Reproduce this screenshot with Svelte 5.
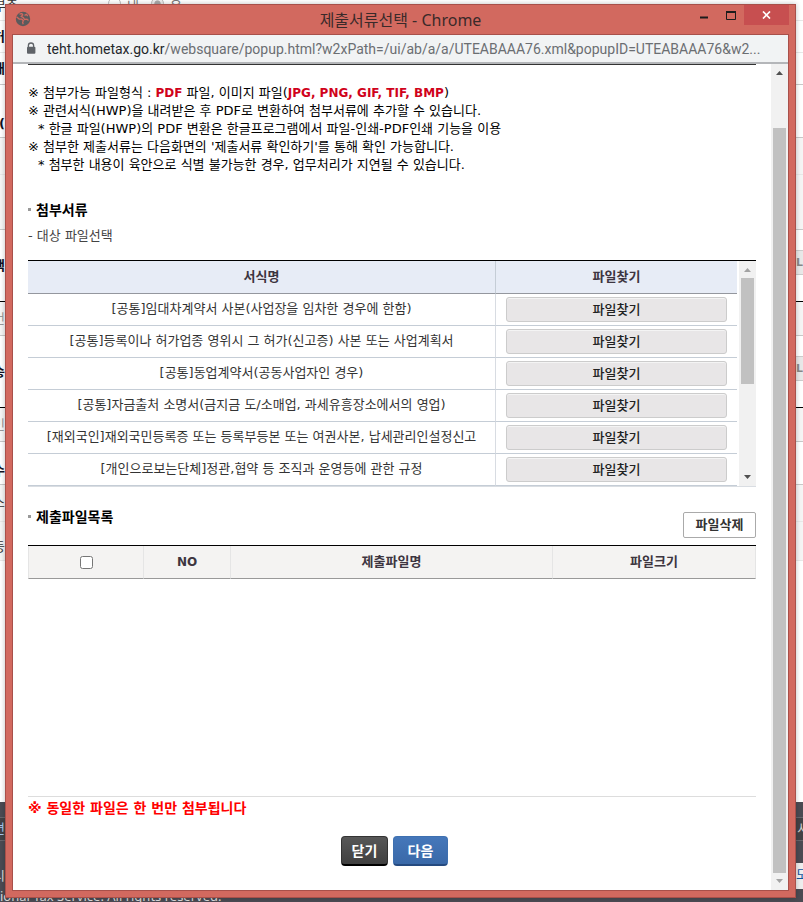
<script>
  const forms = [
    '[공통]임대차계약서 사본(사업장을 임차한 경우에 한함)',
    '[공통]등록이나 허가업종 영위시 그 허가(신고증) 사본 또는 사업계획서',
    '[공통]동업계약서(공동사업자인 경우)',
    '[공통]자금출처 소명서(금지금 도/소매업, 과세유흥장소에서의 영업)',
    '[재외국인]재외국민등록증 또는 등록부등본 또는 여권사본, 납세관리인설정신고',
    '[개인으로보는단체]정관,협약 등 조직과 운영등에 관한 규정'
  ];

  // Rows of the page that lies behind the popup window
  const rows = [
    { h: 21, text: '부주', radios: true },
    { h: 32, text: '허', bold: true },
    { h: 32, text: '배', bold: true, line: 'mid' },
    { h: 53, text: '(', bold: true, low: true, line: 'mid' },
    { h: 37, shade: true },
    { h: 55, shade: true, line: 'mid' },
    { h: 72, text: '택', bold: true, button: true, line: 'black' },
    { h: 34, text: '번', pale: true, shade: true, line: 'mid' },
    { h: 72, text: '송', bold: true, button: true, line: 'black' },
    { h: 34, text: '민', pale: true, shade: true, line: 'mid' },
    { h: 43, text: '수', bold: true, low: true, line: 'mid' },
    { h: 37, text: '소', shade: true },
    { h: 39, text: '동', shade: true, low: true }
  ];
</script>

<div class="screen">
  <div class="behind" aria-hidden="true">
    {#each rows as row}
      <div class="brow {row.line ?? ''}" class:shade={row.shade} class:low={row.low} style="height: {row.h}px">
        <span class="bleft" class:bold={row.bold} class:pale={row.pale}>{row.text ?? ''}</span>
        {#if row.radios}
          <span class="bradios"><i></i>내<i class="on"></i>은</span>
        {/if}
        <span class="bright">{#if row.button}<b>L</b>{/if}</span>
      </div>
    {/each}
    <div class="bspace"></div>
    <div class="bfoot">
      <div class="bnav"><span class="bleft">연</span><span class="bedge">서</span></div>
      <div class="binfo"><span class="bleft">-시</span><span class="bedge bsel">모</span></div>
      <div class="bcopy">ional Tax Service. All rights reserved.</div>
    </div>
  </div>

  <div class="window">
    <header class="titlebar">
      <svg class="globe" width="16" height="16" viewBox="0 0 16 16">
        <circle cx="8" cy="8" r="7.200" fill="#5b5a5c" />
        <path d="M1.500 5.800 4.200 8l2.600.2 1.600 1.500-.8 1.500.6 2M4.500 3.200l2.300-.6 1 1.300-1.600 1.500 2.200 1.300 1.200 1.800 2.400-.3 1.500 1.200M9.500 4.300l2-.9 1.200 1.800" fill="none" stroke="#d0685e" stroke-width="1.300" />
      </svg>
      <h1>제출서류선택 - Chrome</h1>
      <div class="winbtns">
        <button aria-label="최소화"><svg width="10" height="10"><path d="M1 7.500h8" stroke="#1c1c1c" stroke-width="2" /></svg></button>
        <button aria-label="최대화"><svg width="10" height="9"><path d="M.5 0v8.500h9V0" fill="none" stroke="#1c1c1c" /><path d="M0 1h10" stroke="#1c1c1c" stroke-width="2" /></svg></button>
        <button class="x" aria-label="닫기"><svg width="9" height="8"><path d="M1 .5l7 7M8 .5l-7 7" stroke="#fff" stroke-width="1.700" /></svg></button>
      </div>
    </header>

    <div class="frame">
      <div class="address">
        <svg width="10" height="13" viewBox="0 0 10 13"><path d="M2.400 5.500V3.600a2.600 2.600 0 0 1 5.200 0v1.900" fill="none" stroke="#5f6368" stroke-width="1.300" /><rect x="1" y="4.800" width="8.400" height="7" rx="1" fill="#5f6368" /></svg>
        <span class="url"><b>teht.hometax.go.kr</b>/websquare/popup.html?w2xPath=/ui/ab/a/a/UTEABAAA76.xml&amp;popupID=UTEABAAA76&amp;w2...</span>
      </div>

      <div class="viewport">
        <main>
          <div class="guide">
            <p>※ 첨부가능 파일형식 : <strong>PDF</strong> 파일, 이미지 파일(<strong>JPG, PNG, GIF, TIF, BMP</strong>)</p>
            <p>※ 관련서식(HWP)을 내려받은 후 PDF로 변환하여 첨부서류에 추가할 수 있습니다.</p>
            <p class="sub">* 한글 파일(HWP)의 PDF 변환은 한글프로그램에서 파일-인쇄-PDF인쇄 기능을 이용</p>
            <p>※ 첨부한 제출서류는 다음화면의 '제출서류 확인하기'를 통해 확인 가능합니다.</p>
            <p class="sub">* 첨부한 내용이 육안으로 식별 불가능한 경우, 업무처리가 지연될 수 있습니다.</p>
          </div>

          <h2>첨부서류</h2>
          <p class="target">- 대상 파일선택</p>

          <div class="formlist">
            <table>
              <thead><tr><th>서식명</th><th class="find">파일찾기</th></tr></thead>
              <tbody>
                {#each forms as form}
                  <tr><td>{form}</td><td class="find"><button>파일찾기</button></td></tr>
                {/each}
              </tbody>
            </table>
            <div class="bar">
              <svg class="dim" width="7" height="4"><path d="M0 4 3.500 0 7 4z" /></svg>
              <div class="thumb"></div>
              <svg width="7" height="4"><path d="M0 0h7L3.500 4z" /></svg>
            </div>
          </div>

          <div class="listhead">
            <h2>제출파일목록</h2>
            <button class="delete">파일삭제</button>
          </div>

          <div class="files">
            <table>
              <thead>
                <tr>
                  <th class="check"><input type="checkbox" aria-label="전체 선택" /></th>
                  <th class="no">NO</th>
                  <th>제출파일명</th>
                  <th class="size">파일크기</th>
                </tr>
              </thead>
            </table>
          </div>

          <p class="notice">※ 동일한 파일은 한 번만 첨부됩니다</p>

          <div class="actions">
            <button class="close">닫기</button>
            <button class="next">다음</button>
          </div>
        </main>

        <div class="bar page">
          <svg width="7" height="4"><path d="M0 4 3.500 0 7 4z" /></svg>
          <div class="thumb"></div>
          <svg class="dim" width="7" height="4"><path d="M0 0h7L3.500 4z" /></svg>
        </div>
      </div>
    </div>
  </div>
</div>

<style>
  :global(body) { margin: 0; background: #fff; }
  * { box-sizing: border-box; }
  h1, h2, p { margin: 0; }
  button { font: inherit; margin: 0; padding: 0; border: 0; cursor: pointer; }
  svg { display: block; flex: none; }

  .screen {
    position: relative;
    display: flex;
    min-height: 100vh;
    padding: 4px 7px 4px 5px;
    overflow: hidden;
    font-family: "DejaVu Sans", "Noto Sans CJK KR", sans-serif;
    font-size: 13px;
    line-height: 18px;
    color: #000;
  }

  .behind { position: absolute; inset: 0; display: flex; flex-direction: column; color: #333; }
  .brow { display: flex; align-items: center; border-bottom: 1px solid #e8e8e8; }
  .brow.mid { border-color: #c8c8c8; }
  .brow.black { border-color: #000; }
  .brow.shade { background: #f5f5f5; }
  .brow.low { align-items: flex-end; padding-bottom: 4px; }
  .bleft { display: flex; justify-content: flex-end; width: 5px; white-space: nowrap; }
  .brow:first-child { align-items: flex-start; line-height: 12px; }
  .brow:first-child .bleft { width: 18px; }
  .bold { font-weight: 700; color: #112; }
  .pale { color: #999; }
  .bradios { display: flex; gap: 6px; margin-left: 90px; color: #777; }
  .bradios i { width: 13px; height: 13px; margin-top: -3px; border: 1px solid #bbb; border-radius: 50%; }
  .bradios .on { margin-left: 6px; background: radial-gradient(#aaa 35%, #eee 45%); }
  .bright { margin-left: auto; }
  .bright b { display: block; width: 7px; height: 25px; margin-top: -6px; border: solid #ccc; border-width: 1px 0; background: #e8e8e8; line-height: 23px; font-size: 11px; color: #888; }
  .bspace { flex: 1; }
  .bfoot { height: 100px; padding-top: 15px; background: #4b4b53; color: #ddd; }
  .bnav { display: flex; justify-content: space-between; height: 24px; border: solid #66666c; border-width: 1px 0; background: #424246; line-height: 22px; color: #a9c8f0; }
  .bedge { width: 6px; white-space: nowrap; color: #ccc; }
  .binfo { display: flex; justify-content: space-between; align-items: center; height: 48px; padding-top: 22px; }
  .binfo .bsel { width: 7px; height: 26px; background: #eee; color: #1255a0; line-height: 24px; }
  .bcopy { height: 13px; line-height: 14px; white-space: nowrap; font-family: "Noto Sans", sans-serif; }

  .window {
    position: relative;
    flex: 1;
    min-width: 0;
    display: flex;
    flex-direction: column;
    padding: 0 6px 6px;
    border: 1px solid #a8504a;
    background: #d2695f;
    box-shadow: 0 0 5px rgba(0, 0, 0, .25);
  }
  .titlebar { position: relative; display: flex; align-items: center; justify-content: center; height: 29px; }
  .globe { position: absolute; left: 3px; top: 6px; }
  h1 { font: 400 16px/28px "Noto Sans", "Noto Sans CJK KR", sans-serif; color: #3a2a2a; }
  .winbtns { position: absolute; top: 0; right: 0; display: flex; }
  .winbtns button { display: flex; align-items: center; justify-content: center; width: 27px; height: 20px; background: none; }
  .winbtns .x { width: 45px; background: #c74f50; }

  .frame { flex: 1; display: flex; flex-direction: column; border: 1px solid #a8504a; background: #fff; }
  .address { display: flex; align-items: center; gap: 11px; height: 29px; padding: 0 13px; border-bottom: 2px solid #b4b6b9; background: #f1f3f4; }
  .url { min-width: 0; overflow: hidden; white-space: nowrap; font: 14px/20px Roboto, sans-serif; color: #6b6e72; }
  .url b { font-weight: 400; color: #24272b; }

  .viewport { flex: 1; display: flex; }
  main { flex: 1; min-width: 0; padding: 0 15px 24px; }

  .guide { padding-top: 19px; border-top: 1px solid #333; white-space: nowrap; }
  .guide .sub { padding-left: 10px; }
  .guide strong { font-size: 12px; color: #d0021b; }

  h2 { position: relative; padding-left: 8px; font-size: 14px; line-height: 20px; }
  h2::before { content: ""; position: absolute; left: 0; top: 8px; width: 3px; height: 3px; background: #999; }
  .guide + h2 { margin-top: 26px; }
  .target { margin-top: 7px; color: #444; }

  .formlist { display: flex; justify-content: space-between; margin-top: 15px; border-top: 1px solid #000; border-bottom: 1px solid #d9dde2; }
  table { width: 100%; border-collapse: separate; border-spacing: 0; table-layout: fixed; }
  th, td { padding: 0; text-align: center; white-space: nowrap; }
  th { font-weight: 700; color: #3d3540; }
  .formlist table { width: calc(100% - 19px); }
  .formlist th { height: 33px; background: #e7ecf6; border-bottom: 1px solid #94979e; }
  .formlist td { height: 32px; padding-bottom: 2px; border-bottom: 1px solid #c5cdd6; color: #333; overflow: hidden; }
  .formlist td.find { padding-bottom: 0; }
  .formlist .find { width: 242px; border-left: 1px solid #d8dce2; }
  .formlist th.find { border-left-color: #c5cdd6; }
  .find button {
    display: block;
    width: 221px;
    height: 25px;
    margin: 0 auto;
    border: 1px solid #ccc;
    border-radius: 3px;
    background: #e8e6e7;
    box-shadow: inset 0 1px #f4f4f4;
    font-size: 13px;
    font-weight: 500;
    line-height: 24px;
    color: #222;
  }

  .bar { display: flex; flex-direction: column; align-items: center; width: 17px; padding: 7px 2px; background: #f1f1f1; fill: #505050; }
  .bar .dim { fill: #a3a3a3; }
  .bar .thumb { width: 100%; height: 106px; margin: 6px 0 auto; background: #c1c1c1; }
  .page { flex: none; }
  .page .thumb { flex: 1; margin: 53px 0 6px; }

  .listhead { display: flex; justify-content: space-between; align-items: flex-start; padding-top: 20px; }
  .delete { width: 73px; height: 26px; margin-top: 5px; border: 1px solid #aaa; border-radius: 2px; background: #fff; font-weight: 700; color: #333; }
  .files { min-height: 252px; margin-top: 7px; border-top: 1px solid #000; border-bottom: 1px solid #ddd; }
  .files th { height: 33px; border: solid #e5e5e5; border-width: 0 0 0 1px; border-bottom: 1px solid #999; background: #f4f3f2; }
  .files th:last-child { border-right: 1px solid #e5e5e5; }
  .files .check { width: 115px; }
  .files .no { width: 87px; font-size: 12px; }
  .files .size { width: 204px; }
  input { display: block; width: 13px; height: 13px; margin: 0 auto; }

  .notice { margin-top: 2px; font-size: 14px; font-weight: 700; color: #f00; }
  .actions { display: flex; justify-content: center; gap: 5px; margin-top: 19px; padding-left: 5px; }
  .actions button { height: 30px; border-radius: 4px; font-size: 14px; font-weight: 700; line-height: 26px; color: #fff; }
  .close { width: 47px; border: 1px solid #333; border-bottom: 2px solid #000; background: linear-gradient(#575757, #404040); }
  .next { width: 55px; border: 1px solid #3e70b0; border-bottom: 2px solid #254a80; background: linear-gradient(#4577ba, #3a69a8); }
</style>
